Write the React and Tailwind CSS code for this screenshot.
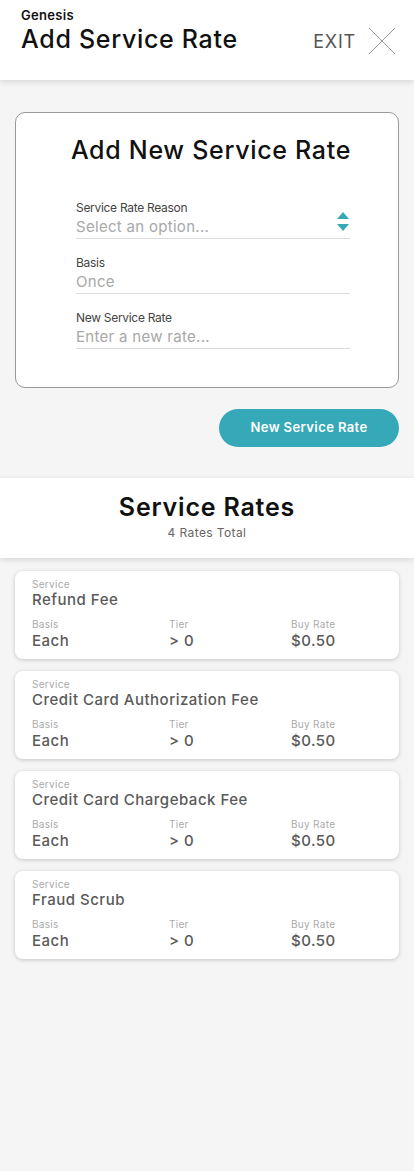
import React from 'react'

const rates = [
  { name: "Refund Fee" },
  { name: "Credit Card Authorization Fee" },
  { name: "Credit Card Chargeback Fee" },
  { name: "Fraud Scrub" },
]

function Field({ label, placeholder, select }) {
  return (
    <div className="flex flex-col">
      <label className="text-[12px] leading-[17px] text-[#444] tracking-[-0.3px]">{label}</label>
      <div className="flex items-center justify-between border-b border-[#dcdcdc] pb-[1px]">
        <span className="text-[15px] leading-[21px] text-[#a8a8a8] tracking-[0.3px]">{placeholder}</span>
        {select && (
          <svg width="14" height="22" viewBox="0 0 14 22" className="-mt-[10px]">
            <polygon points="7,1 13,8 1,8" fill="#35a9b8" />
            <polygon points="1,13 13,13 7,20" fill="#35a9b8" />
          </svg>
        )}
      </div>
    </div>
  )
}

function RateCard({ name }) {
  return (
    <div className="bg-white rounded-[8px] shadow-[0_1px_4px_rgba(0,0,0,0.2)] px-[17px] pt-[7px] pb-[8px]">
      <div className="text-[10px] leading-[12px] text-[#aaa] tracking-[0.3px]">Service</div>
      <div className="text-[15px] leading-[21px] font-medium text-[#5a5a5a] tracking-[0.5px] -mt-[1px]">{name}</div>
      <div className="flex mt-[8px]">
        <div className="w-[137px]">
          <div className="text-[10px] leading-[12px] text-[#aaa] tracking-[0.3px]">Basis</div>
          <div className="text-[15px] leading-[21px] font-medium text-[#5a5a5a] tracking-[0.5px]">Each</div>
        </div>
        <div className="w-[122px]">
          <div className="text-[10px] leading-[12px] text-[#aaa] tracking-[0.3px]">Tier</div>
          <div className="text-[15px] leading-[21px] font-medium text-[#5a5a5a] tracking-[0.5px]">&gt; 0</div>
        </div>
        <div>
          <div className="text-[10px] leading-[12px] text-[#aaa] tracking-[0.3px]">Buy Rate</div>
          <div className="text-[15px] leading-[21px] font-medium text-[#5a5a5a] tracking-[0.5px]">$0.50</div>
        </div>
      </div>
    </div>
  )
}

export default function App() {
  return (
    <div className="min-h-[1171px] bg-[#f5f5f5]" style={{ fontFamily: "Inter, 'Liberation Sans', sans-serif" }}>
      {/* header */}
      <div className="bg-white h-[80px] shadow-[0_2px_6px_rgba(0,0,0,0.12)] flex justify-between px-[21px] pt-[6px]">
        <div>
          <div className="text-[13px] leading-[18px] font-semibold text-[#111] tracking-[0.3px]">Genesis</div>
          <div className="text-[25px] leading-[30px] font-medium text-[#111] tracking-[0.7px]">Add Service Rate</div>
        </div>
        <div className="flex items-center h-[58px] pt-[12px] gap-[12px] -mr-[3px]">
          <span className="text-[18px] text-[#555] tracking-[0.8px]">EXIT</span>
          <svg width="28" height="28" viewBox="0 0 28 28">
            <line x1="1" y1="1" x2="27" y2="27" stroke="#999" strokeWidth="1" />
            <line x1="27" y1="1" x2="1" y2="27" stroke="#999" strokeWidth="1" />
          </svg>
        </div>
      </div>

      {/* form */}
      <div className="px-[15px] pt-[32px]">
        <div className="bg-white border border-[#999] rounded-[10px] h-[276px] pt-[20px]">
          <h2 className="text-[25px] leading-[34px] font-medium text-[#111] text-center tracking-[0.7px] pl-[8px]">Add New Service Rate</h2>
          <div className="flex flex-col gap-[15px] mt-[32px] ml-[60px] mr-[48px]">
            <Field label="Service Rate Reason" placeholder="Select an option..." select />
            <Field label="Basis" placeholder="Once" />
            <Field label="New Service Rate" placeholder="Enter a new rate..." />
          </div>
        </div>
        <div className="flex justify-end mt-[21px]">
          <button className="w-[180px] h-[38px] rounded-full bg-[#35a9b8] text-white text-[13px] font-semibold tracking-[0.4px]">
            New Service Rate
          </button>
        </div>
      </div>

      {/* list header */}
      <div className="bg-white mt-[31px] h-[80px] shadow-[0_2px_6px_rgba(0,0,0,0.12)] flex flex-col items-center pt-[14px]">
        <div className="text-[25px] leading-[30px] font-semibold text-[#111] tracking-[0.8px]">Service Rates</div>
        <div className="text-[12px] leading-[16px] text-[#666] tracking-[0.4px] mt-[3px]">4 Rates Total</div>
      </div>

      <div className="flex flex-col gap-[12px] px-[15px] pt-[13px] pb-[40px]">
        {rates.map((r) => (
          <RateCard key={r.name} name={r.name} />
        ))}
      </div>
    </div>
  )
}
